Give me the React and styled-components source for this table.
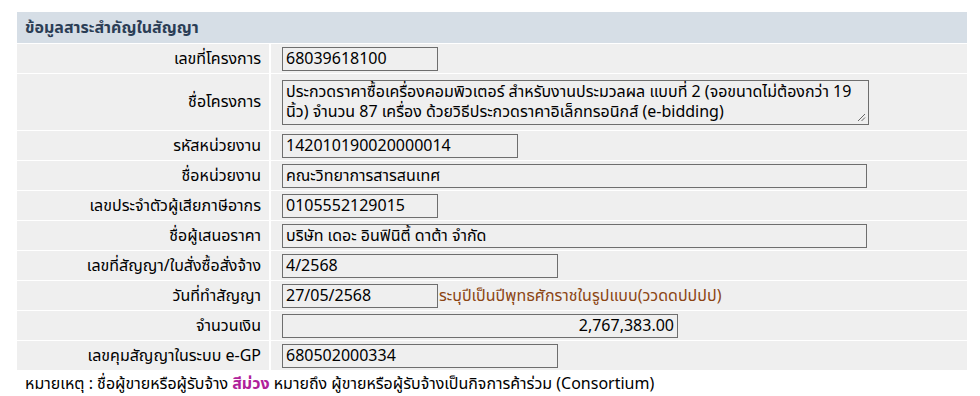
import { Fragment } from "react";
import styled, { createGlobalStyle } from "styled-components";

const GlobalStyle = createGlobalStyle`
  body {
    margin: 0;
    background: #ffffff;
    font-family: Tahoma, "Noto Sans Thai", "Noto Sans", "DejaVu Sans", sans-serif;
    font-size: 16px;
    color: #000;
  }
`;

const Page = styled.div`
  padding: 12px 13px 0 17px;
`;

const Sheet = styled.div`
  display: grid;
  grid-template-columns: 252px 1fr;
  column-gap: 2px;
  row-gap: 1px;
  width: 950px;
`;

const Heading = styled.div`
  grid-column: 1 / -1;
  height: 31px;
  display: flex;
  align-items: center;
  padding-left: 8px;
  background: #d6dee6;
  color: #2b3d55;
  font-weight: bold;
`;

const Label = styled.div`
  display: flex;
  align-items: center;
  justify-content: flex-end;
  padding-right: 8px;
  min-height: ${(p) => (p.$tall ? "56px" : "29px")};
  background: #efefef;
`;

const Value = styled.div`
  display: flex;
  align-items: center;
  gap: 1px;
  padding-left: 11px;
  background: #efefef;
`;

const Field = styled.div`
  box-sizing: border-box;
  width: ${(p) => p.$w}px;
  height: 24px;
  padding: 0 3px;
  border: 1px solid #6e6e6e;
  background: #efefef;
  display: flex;
  align-items: center;
  justify-content: ${(p) => (p.$right ? "flex-end" : "flex-start")};
  white-space: nowrap;
`;

const Memo = styled.div`
  position: relative;
  box-sizing: border-box;
  width: 587px;
  height: 45px;
  padding: 1px 3px;
  border: 1px solid #6e6e6e;
  background: #efefef;
  line-height: 20px;
`;

const Grip = styled.svg`
  position: absolute;
  right: 2px;
  bottom: 2px;
`;

const Hint = styled.span`
  color: #8b4513;
`;

const Note = styled.div`
  padding: 4px 0 0 8px;
  line-height: 20px;
`;

const Purple = styled.b`
  color: #b0209a;
`;

const rows = [
  { label: "เลขที่โครงการ", value: "68039618100", w: 156 },
  { label: "ชื่อโครงการ", memo: true },
  { label: "รหัสหน่วยงาน", value: "142010190020000014", w: 236 },
  { label: "ชื่อหน่วยงาน", value: "คณะวิทยาการสารสนเทศ", w: 585 },
  { label: "เลขประจำตัวผู้เสียภาษีอากร", value: "0105552129015", w: 156 },
  { label: "ชื่อผู้เสนอราคา", value: "บริษัท เดอะ อินฟินิตี้ ดาต้า จำกัด", w: 585 },
  { label: "เลขที่สัญญา/ใบสั่งซื้อสั่งจ้าง", value: "4/2568", w: 276 },
  {
    label: "วันที่ทำสัญญา",
    value: "27/05/2568",
    w: 156,
    hint: "ระบุปีเป็นปีพุทธศักราชในรูปแบบ(ววดดปปปป)",
  },
  { label: "จำนวนเงิน", value: "2,767,383.00", w: 396, right: true },
  { label: "เลขคุมสัญญาในระบบ e-GP", value: "680502000334", w: 276 },
];

export default function App() {
  return (
    <Page>
      <GlobalStyle />
      <Sheet>
        <Heading>ข้อมูลสาระสำคัญในสัญญา</Heading>
        {rows.map((r) => (
          <Fragment key={r.label}>
            <Label $tall={r.memo}>{r.label}</Label>
            <Value>
              {r.memo ? (
                <Memo>
                  ประกวดราคาซื้อเครื่องคอมพิวเตอร์ สำหรับงานประมวลผล แบบที่ 2 (จอขนาดไม่ต้องกว่า 19
                  นิ้ว) จำนวน 87 เครื่อง ด้วยวิธีประกวดราคาอิเล็กทรอนิกส์ (e-bidding)
                  <Grip width="9" height="9" viewBox="0 0 9 9">
                    <path d="M8 1 L1 8 M8 4.5 L4.5 8" stroke="#666" strokeWidth="1" />
                  </Grip>
                </Memo>
              ) : (
                <Field $w={r.w} $right={r.right}>
                  {r.value}
                </Field>
              )}
              {r.hint && <Hint>{r.hint}</Hint>}
            </Value>
          </Fragment>
        ))}
      </Sheet>
      <Note>
        หมายเหตุ : ชื่อผู้ขายหรือผู้รับจ้าง <Purple>สีม่วง</Purple> หมายถึง
        ผู้ขายหรือผู้รับจ้างเป็นกิจการค้าร่วม (Consortium)
      </Note>
    </Page>
  );
}
